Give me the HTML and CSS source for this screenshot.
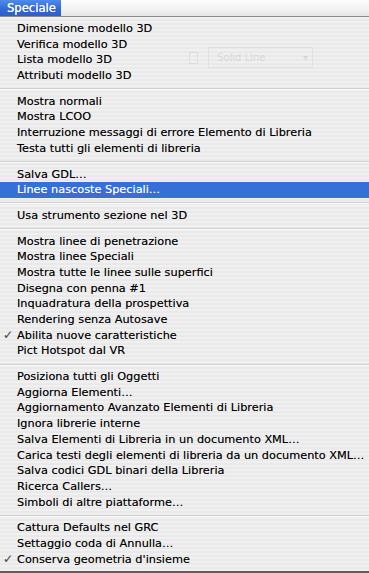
FILE: index.html
```html
<!DOCTYPE html>
<html>
<head>
<meta charset="utf-8">
<link rel="stylesheet" href="styles.css">
</head>
<body>
<div class="screen">
  <div class="menubar"><div class="title">Speciale</div></div>
  <div class="menu">
    <div class="ghost"><span class="ghost-ico"></span><span class="ghost-field">Solid Line<span class="ghost-arrow">▾</span></span></div>
    <div class="item"><span class="check"></span><span class="label">Dimensione modello 3D</span></div>
    <div class="item"><span class="check"></span><span class="label">Verifica modello 3D</span></div>
    <div class="item"><span class="check"></span><span class="label">Lista modello 3D</span></div>
    <div class="item"><span class="check"></span><span class="label">Attributi modello 3D</span></div>
    <div class="sep"></div>
    <div class="item"><span class="check"></span><span class="label">Mostra normali</span></div>
    <div class="item"><span class="check"></span><span class="label">Mostra LCOO</span></div>
    <div class="item"><span class="check"></span><span class="label">Interruzione messaggi di errore Elemento di Libreria</span></div>
    <div class="item"><span class="check"></span><span class="label">Testa tutti gli elementi di libreria</span></div>
    <div class="sep"></div>
    <div class="item"><span class="check"></span><span class="label">Salva GDL…</span></div>
    <div class="item selected"><span class="check"></span><span class="label">Linee nascoste Speciali…</span></div>
    <div class="sep"></div>
    <div class="item"><span class="check"></span><span class="label">Usa strumento sezione nel 3D</span></div>
    <div class="sep"></div>
    <div class="item"><span class="check"></span><span class="label">Mostra linee di penetrazione</span></div>
    <div class="item"><span class="check"></span><span class="label">Mostra linee Speciali</span></div>
    <div class="item"><span class="check"></span><span class="label">Mostra tutte le linee sulle superfici</span></div>
    <div class="item"><span class="check"></span><span class="label">Disegna con penna #1</span></div>
    <div class="item"><span class="check"></span><span class="label">Inquadratura della prospettiva</span></div>
    <div class="item"><span class="check"></span><span class="label">Rendering senza Autosave</span></div>
    <div class="item"><span class="check">✓</span><span class="label">Abilita nuove caratteristiche</span></div>
    <div class="item"><span class="check"></span><span class="label">Pict Hotspot dal VR</span></div>
    <div class="sep"></div>
    <div class="item"><span class="check"></span><span class="label">Posiziona tutti gli Oggetti</span></div>
    <div class="item"><span class="check"></span><span class="label">Aggiorna Elementi…</span></div>
    <div class="item"><span class="check"></span><span class="label">Aggiornamento Avanzato Elementi di Libreria</span></div>
    <div class="item"><span class="check"></span><span class="label">Ignora librerie interne</span></div>
    <div class="item"><span class="check"></span><span class="label">Salva Elementi di Libreria in un documento XML…</span></div>
    <div class="item"><span class="check"></span><span class="label">Carica testi degli elementi di libreria da un documento XML…</span></div>
    <div class="item"><span class="check"></span><span class="label">Salva codici GDL binari della Libreria</span></div>
    <div class="item"><span class="check"></span><span class="label">Ricerca Callers…</span></div>
    <div class="item"><span class="check"></span><span class="label">Simboli di altre piattaforme…</span></div>
    <div class="sep"></div>
    <div class="item"><span class="check"></span><span class="label">Cattura Defaults nel GRC</span></div>
    <div class="item"><span class="check"></span><span class="label">Settaggio coda di Annulla…</span></div>
    <div class="item"><span class="check">✓</span><span class="label">Conserva geometria d'insieme</span></div>
  </div>
</div>
</body>
</html>
```

FILE: styles.css
```css
html, body {
  margin: 0;
  padding: 0;
  background: #ececec;
}
.screen {
  width: 369px;
  height: 573px;
  overflow: hidden;
  font-family: "DejaVu Sans", "Liberation Sans", sans-serif;
  color: #000;
}
.menubar {
  height: 16px;
  border-bottom: 1px solid #8a8a8a;
  background: linear-gradient(#fdfdfd, #f2f2f2 60%, #e6e6e6);
  display: flex;
}
.title {
  width: 61px;
  height: 16px;
  box-sizing: border-box;
  padding-left: 7px;
  background: linear-gradient(#4f8cec, #3269d6 55%, #2a5ecb);
  color: #fff;
  font-size: 11.6px;
  line-height: 16px;
  text-shadow: 0 0 0.5px #fff;
}
.menu {
  position: relative;
  padding: 4px 0 4px 0;
  border-bottom: 2px solid #5e5e5e;
  background: repeating-linear-gradient(#f0f0f0 0 2px, #e9e9e9 2px 4px);
}
.item {
  position: relative;
  display: flex;
  height: 15.7px;
  line-height: 15.7px;
  font-size: 11.3px;
  white-space: nowrap;
  text-shadow: 0 0 0.3px rgba(0, 0, 0, 0.45);
}
.item.selected {
  background: #3670d6;
  color: #fff;
  text-shadow: 0 0 0.3px rgba(255, 255, 255, 0.6);
}
.check {
  width: 17px;
  flex: none;
  box-sizing: border-box;
  padding-left: 3px;
  font-size: 12px;
  color: #555;
}
.label {
  flex: none;
}
.sep {
  height: 10px;
  display: flex;
  align-items: center;
}
.sep::after {
  content: "";
  display: block;
  width: 100%;
  height: 1px;
  background: #cfcfcf;
  box-shadow: 0 1px 0 #fafafa;
}
.ghost {
  position: absolute;
  left: 189px;
  top: 30px;
  display: flex;
  align-items: center;
  gap: 10px;
  opacity: 0.1;
  font-size: 10px;
  color: #333;
}
.ghost-ico {
  width: 7px;
  height: 10px;
  border: 1px solid #666;
}
.ghost-field {
  position: relative;
  width: 105px;
  height: 21px;
  box-sizing: border-box;
  border: 1px solid #888;
  padding-left: 8px;
  line-height: 19px;
}
.ghost-arrow {
  position: absolute;
  right: 4px;
  top: 0;
}
```
